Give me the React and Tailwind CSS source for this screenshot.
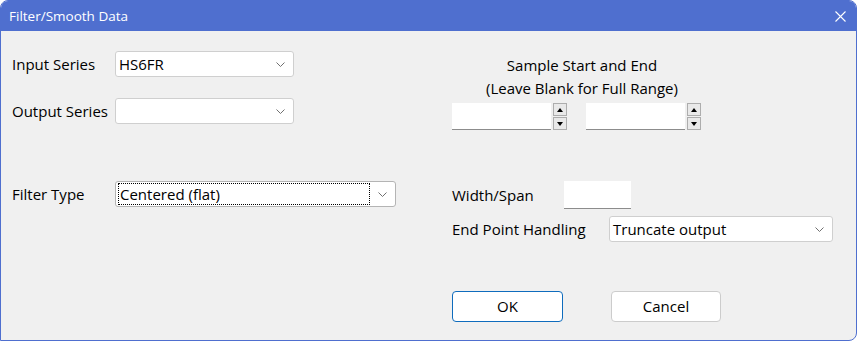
const font = { fontFamily: '"Open Sans", "Noto Sans", sans-serif' };

function Chevron() {
  return (
    <svg width="9" height="5" viewBox="0 0 9 5" className="shrink-0">
      <path d="M0.5 0.5 L4.5 4.5 L8.5 0.5" fill="none" stroke="#707070" strokeWidth="1" />
    </svg>
  );
}

function Combo({ value, width, focused }) {
  return (
    <div
      className={`flex h-[26px] items-center rounded-[3px] border bg-white pr-[8px] ${focused ? "border-[#b4b4b4] pl-[2px]" : "border-[#cfcfcf] pl-[3px]"}`}
      style={{ width }}
    >
      {focused ? (
        <div className="mr-[8px] flex h-[22px] flex-1 items-center border border-dotted border-black pl-[1px] leading-none">
          {value}
        </div>
      ) : (
        <div className="flex-1 leading-none">{value}</div>
      )}
      <Chevron />
    </div>
  );
}

function SpinBox() {
  return (
    <div className="flex items-center gap-[2px]">
      <div className="h-[27px] w-[99px] border-b border-[#8c8c8c] bg-white" />
      <div className="flex flex-col gap-[1px]">
        <div className="flex h-[13px] w-[14px] items-center justify-center border border-[#adadad] bg-[#e9e9e9]">
          <svg width="6" height="4" viewBox="0 0 6 4"><path d="M0 4 L3 0 L6 4 Z" fill="#000" /></svg>
        </div>
        <div className="flex h-[13px] w-[14px] items-center justify-center border border-[#adadad] bg-[#e9e9e9]">
          <svg width="6" height="4" viewBox="0 0 6 4"><path d="M0 0 L3 4 L6 0 Z" fill="#000" /></svg>
        </div>
      </div>
    </div>
  );
}

export default function App() {
  return (
    <div className="h-[341px] w-[857px] overflow-hidden rounded-t-[8px] rounded-br-[8px] border border-[#4f6fcf] bg-[#f0f0f0] text-[15px] text-black" style={font}>
      <div className="flex h-[30px] items-center justify-between bg-[#4f6fcf] pl-[8px] pr-[10px] text-[13.5px] text-white">
        <span>Filter/Smooth Data</span>
        <svg width="11" height="11" viewBox="0 0 11 11">
          <path d="M0.5 0.5 L10.5 10.5 M10.5 0.5 L0.5 10.5" stroke="#fff" strokeWidth="1.1" />
        </svg>
      </div>

      <div className="flex">
        <div className="flex w-[451px] flex-col pl-[11px] pt-[20px]">
          <div className="flex items-center">
            <span className="w-[103px]">Input Series</span>
            <Combo value="HS6FR" width={179} />
          </div>
          <div className="mt-[21px] flex items-center">
            <span className="w-[103px]">Output Series</span>
            <Combo value="" width={179} />
          </div>
          <div className="mt-[57px] flex items-center">
            <span className="w-[103px]">Filter Type</span>
            <Combo value="Centered (flat)" width={281} focused />
          </div>
        </div>

        <div className="flex flex-col pt-[23px]">
          <div className="w-[260px] text-center leading-[23px]">
            <div>Sample Start and End</div>
            <div>(Leave Blank for Full Range)</div>
          </div>
          <div className="mt-[3px] flex gap-[19px]">
            <SpinBox />
            <SpinBox />
          </div>
          <div className="mt-[51px] flex items-center">
            <span className="w-[112px]">Width/Span</span>
            <div className="h-[28px] w-[67px] border-b border-[#8c8c8c] bg-white" />
          </div>
          <div className="mt-[7px] flex items-center">
            <span className="w-[157px]">End Point Handling</span>
            <Combo value="Truncate output" width={224} />
          </div>
          <div className="mt-[49px] flex gap-[48px]">
            <button className="h-[31px] w-[111px] rounded-[4px] border border-[#0f6cbd] bg-white leading-none">OK</button>
            <button className="h-[31px] w-[110px] rounded-[4px] border border-[#cccccc] bg-white leading-none">Cancel</button>
          </div>
        </div>
      </div>
    </div>
  );
}
